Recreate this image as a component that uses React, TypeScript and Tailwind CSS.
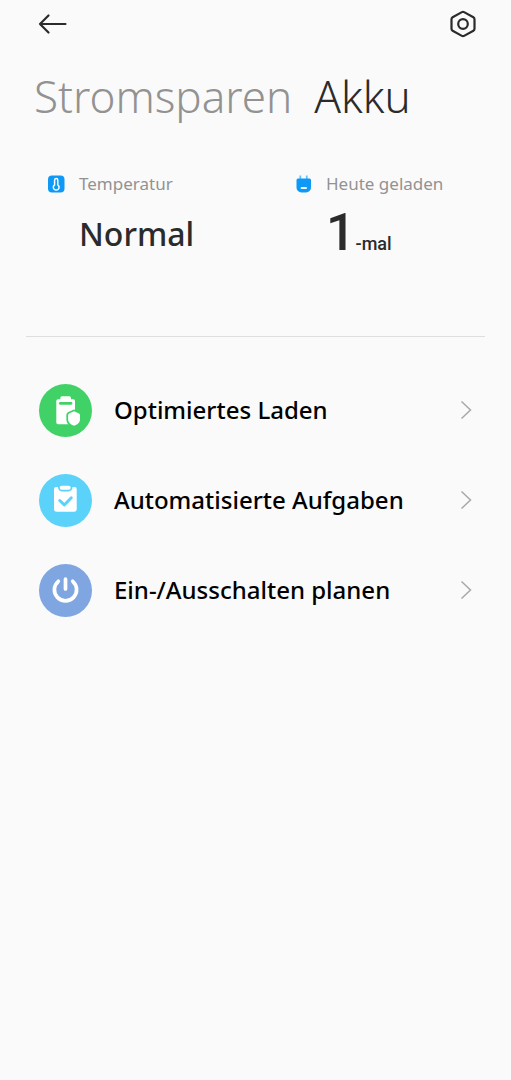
import type { ReactNode } from "react";

const ThermometerIcon = () => (
  <svg className="size-[18px] shrink-0" viewBox="0 0 18 18" fill="none">
    <rect x="1" y="0.500" width="16.500" height="17" rx="4" fill="#0d99f5" />
    <path
      d="M7.600 5.200a1.600 1.600 0 0 1 3.200 0v4.600a2.900 2.900 0 1 1-3.200 0z"
      stroke="#fff"
      strokeWidth="1.500"
    />
  </svg>
);

const PlugIcon = () => (
  <svg className="size-[18px] shrink-0" viewBox="0 0 18 18" fill="none">
    <path d="M6.300 0.500v4M12.800 0.500v4" stroke="#6cc0f9" strokeWidth="1.800" />
    <path
      d="M4 3.500h11.500A1.500 1.500 0 0 1 17 5v7.500a5 5 0 0 1-5 5H7.500a5 5 0 0 1-5-5V5A1.500 1.500 0 0 1 4 3.500z"
      fill="#0d99f5"
    />
    <path d="M6.800 13h6" stroke="#fff" strokeWidth="1.800" />
  </svg>
);

const ChargingIcon = () => (
  <svg className="size-full" viewBox="0 0 53 53" fill="none">
    <path
      d="M19 15.300h2.300V14a1.700 1.700 0 0 1 1.700-1.700h7.300A1.700 1.700 0 0 1 32 14v1.300h2.300A1.700 1.700 0 0 1 36 17v23.300H19a1.700 1.700 0 0 1-1.700-1.700V17a1.700 1.700 0 0 1 1.700-1.700z"
      fill="#fff"
    />
    <path d="M21.300 19.300h10.700" stroke="#40d266" strokeWidth="2.700" strokeLinecap="round" />
    <path
      d="M35 27.300l5 2.200q1 .5 1 1.500v4.500c0 3-2.500 5.200-6 6.300-3.500-1.100-5.900-3.300-5.900-6.300V31q0-1 1-1.500z"
      fill="#40d266"
      stroke="#40d266"
      strokeWidth="3.500"
      strokeLinejoin="round"
    />
    <path
      d="M35 27.300l5 2.200q1 .5 1 1.500v4.500c0 3-2.500 5.200-6 6.300-3.500-1.100-5.900-3.300-5.900-6.300V31q0-1 1-1.500z"
      fill="#fff"
    />
  </svg>
);

const TasksIcon = () => (
  <svg className="size-full" viewBox="0 0 53 53" fill="none">
    <path
      d="M17 13h2c0 2.600 1.500 4.400 4 4.400h6.500c2.500 0 4-1.800 4-4.400h2.200a2 2 0 0 1 2 2v20a2.700 2.700 0 0 1-2.700 2.700H17.700A2.700 2.700 0 0 1 15 35V15a2 2 0 0 1 2-2z"
      fill="#fff"
    />
    <rect x="20.700" y="11.700" width="11" height="4" rx="2" fill="#fff" />
    <path
      d="M20.700 26.500l4.600 4.400 7-7.200"
      stroke="#5bd2fa"
      strokeWidth="2.900"
      strokeLinecap="round"
      strokeLinejoin="round"
    />
  </svg>
);

const PowerIcon = () => (
  <svg className="size-full" viewBox="0 0 53 53" fill="none">
    <path
      d="M19.300 17.300a11.100 11.100 0 1 0 14.400 0M26.500 15.200v9.800"
      stroke="#fff"
      strokeWidth="3.700"
      strokeLinecap="round"
    />
  </svg>
);

const Chevron = () => (
  <svg className="h-5 w-3 shrink-0" viewBox="0 0 12 20" fill="none">
    <path d="M1.500 1.500L10.500 10l-9 8.500" stroke="#a8a8a8" strokeWidth="1.500" />
  </svg>
);

type StatProps = {
  icon: ReactNode;
  label: string;
  children: ReactNode;
};

const Stat = ({ icon, label, children }: StatProps) => (
  <div className="flex gap-[14px]">
    <div className="pt-[3px]">{icon}</div>
    <div>
      <p className="text-[17px] leading-6 text-[#929292] whitespace-nowrap">{label}</p>
      <div className="flex h-[60px] items-baseline text-[#2b2b2b]">{children}</div>
    </div>
  </div>
);

const rows = [
  { label: "Optimiertes Laden", color: "bg-[#40d266]", icon: <ChargingIcon /> },
  { label: "Automatisierte Aufgaben", color: "bg-[#5bd2fa]", icon: <TasksIcon /> },
  { label: "Ein-/Ausschalten planen", color: "bg-[#7fa6e0]", icon: <PowerIcon /> },
];

const App = () => {
  return (
    <div className="min-h-screen w-full bg-[#fafafa] font-['Noto_Sans',sans-serif]">
      <header className="flex items-center justify-between pt-2 pr-8 pl-9">
        <button type="button" aria-label="Zurück" className="size-8">
          <svg className="size-8" viewBox="0 0 32 32" fill="none">
            <path
              d="M29.500 16H4M12.500 7.500L4 16l8.500 8.500"
              stroke="#2b2b2b"
              strokeWidth="2.200"
              strokeLinecap="round"
              strokeLinejoin="round"
            />
          </svg>
        </button>
        <button type="button" aria-label="Einstellungen" className="size-8">
          <svg className="size-8" viewBox="0 0 32 32" fill="none">
            <path
              d="M14.900 4.100q1.100-.6 2.200 0l9.300 5.200q1.100.6 1.100 1.900v9.600q0 1.300-1.100 1.900l-9.300 5.200q-1.100.6-2.200 0l-9.300-5.200q-1.100-.6-1.100-1.900v-9.600q0-1.300 1.100-1.900z"
              stroke="#2b2b2b"
              strokeWidth="2.200"
            />
            <circle cx="16" cy="16" r="4.800" stroke="#2b2b2b" strokeWidth="2.200" />
          </svg>
        </button>
      </header>

      <nav className="flex gap-[22px] pt-6 pl-[34px] text-[44px] leading-[64px] font-light">
        <button type="button" className="text-[#929292]">
          Stromsparen
        </button>
        <button type="button" className="text-[#2b2b2b]">
          Akku
        </button>
      </nav>

      <section className="grid grid-cols-[247fr_217fr] pt-11 pl-[47px]">
        <Stat icon={<ThermometerIcon />} label="Temperatur">
          <p className="text-[32px] leading-[76px] font-medium">Normal</p>
        </Stat>
        <Stat icon={<PlugIcon />} label="Heute geladen">
          <p className="font-[Roboto,sans-serif] text-[52px] leading-[74px] font-medium">1</p>
          <p className="font-[Roboto,sans-serif] text-[18px] font-medium">-mal</p>
        </Stat>
      </section>

      <hr className="mx-[26px] mt-20 border-[#dedede]" />

      <ul className="pt-7">
        {rows.map((row) => (
          <li key={row.label}>
            <button type="button" className="flex h-[90px] w-full items-center pr-[39px] pl-[39px] text-left">
              <span className={`size-[53px] shrink-0 rounded-full ${row.color}`}>{row.icon}</span>
              <span className="flex-1 pl-[22px] text-[24px] leading-8 font-medium text-black">{row.label}</span>
              <Chevron />
            </button>
          </li>
        ))}
      </ul>
    </div>
  );
};

export default App;
